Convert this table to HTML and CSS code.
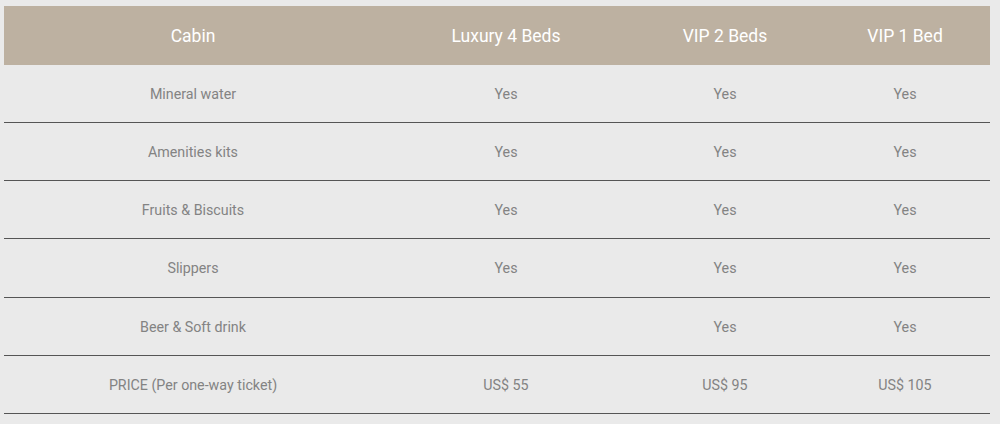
FILE: index.html
```html
<!DOCTYPE html>
<html>
<head>
<meta charset="utf-8">
<link rel="stylesheet" href="styles.css">
</head>
<body>
<div class="wrap">
<table class="cabins">
  <colgroup>
    <col class="c1"><col class="c2"><col class="c3"><col class="c4">
  </colgroup>
  <thead>
    <tr><th>Cabin</th><th>Luxury 4 Beds</th><th>VIP 2 Beds</th><th>VIP 1 Bed</th></tr>
  </thead>
  <tbody>
    <tr><td>Mineral water</td><td>Yes</td><td>Yes</td><td>Yes</td></tr>
    <tr><td>Amenities kits</td><td>Yes</td><td>Yes</td><td>Yes</td></tr>
    <tr><td>Fruits &amp; Biscuits</td><td>Yes</td><td>Yes</td><td>Yes</td></tr>
    <tr><td>Slippers</td><td>Yes</td><td>Yes</td><td>Yes</td></tr>
    <tr><td>Beer &amp; Soft drink</td><td></td><td>Yes</td><td>Yes</td></tr>
    <tr><td>PRICE (Per one-way ticket)</td><td>US$ 55</td><td>US$ 95</td><td>US$ 105</td></tr>
  </tbody>
</table>
</div>
</body>
</html>
```
FILE: styles.css
```css
html, body {
  margin: 0;
  padding: 0;
  background: #eaeaea;
}
.wrap {
  padding: 6px 10px 0 4px;
}
.cabins {
  width: 986px;
  border-collapse: collapse;
  table-layout: fixed;
  font-family: Roboto, "Liberation Sans", sans-serif;
}
.c1 { width: 378px; }
.c2 { width: 248px; }
.c3 { width: 190px; }
.c4 { width: 170px; }
.cabins th {
  background: #bdb1a1;
  color: #ffffff;
  font-weight: 400;
  font-size: 17.5px;
  height: 57.8px;
  padding: 1px 0 0;
  text-align: center;
  vertical-align: middle;
}
.cabins td {
  color: #838383;
  font-size: 14.25px;
  height: 56.2px;
  padding: 1px 0 0;
  text-align: center;
  vertical-align: middle;
  border-bottom: 1px solid #555555;
}
```
